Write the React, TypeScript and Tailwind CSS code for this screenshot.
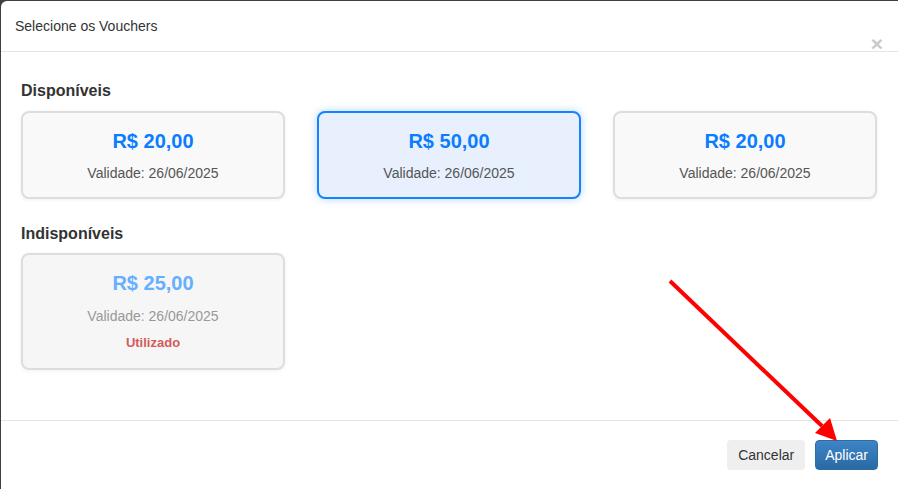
const font = { fontFamily: '"Liberation Sans", Arial, sans-serif' };

type Voucher = { valor: string; validade: string; selected?: boolean };

const disponiveis: Voucher[] = [
  { valor: "R$ 20,00", validade: "26/06/2025" },
  { valor: "R$ 50,00", validade: "26/06/2025", selected: true },
  { valor: "R$ 20,00", validade: "26/06/2025" },
];

function VoucherCard({ v }: { v: Voucher }) {
  return (
    <div
      className={
        v.selected
          ? "rounded-[8px] border-2 border-[#1682fb] bg-[#e7f0fc] pt-4 pb-4 text-center shadow-[0_0_8px_rgba(0,123,255,0.3)]"
          : "rounded-[8px] border-2 border-[#dddddd] bg-[#f9f9f9] pt-4 pb-4 text-center shadow-[0_1px_4px_rgba(0,0,0,0.06)]"
      }
    >
      <div className="text-[20px] leading-6 font-bold text-[#0a7cff]">{v.valor}</div>
      <div className="mt-[12px] text-sm leading-4 text-[#555]">Validade: {v.validade}</div>
    </div>
  );
}

export default function App() {
  return (
    <div className="relative h-[489px] w-[898px] overflow-hidden bg-[#3f3f3f] pl-px pt-px" style={font}>
      <div className="h-full rounded-tl-[6px] bg-white">
        {/* header */}
        <div className="relative border-b border-[#e5e5e5] py-[15px] pl-[14px] pr-[15px]">
          <h4 className="text-sm leading-5 text-[#333]">Selecione os Vouchers</h4>
          <span className="absolute right-[15px] top-[33px] text-[21px] leading-5 font-bold text-[#c9c9c9]">×</span>
        </div>

        {/* body */}
        <div className="pl-[20px] pr-[21px] pt-[30px] pb-[50px]">
          <h3 className="text-base leading-[18px] font-bold text-[#333]">Disponíveis</h3>
          <div className="mt-[11px] grid grid-cols-3 gap-8">
            {disponiveis.map((v, i) => (
              <VoucherCard key={i} v={v} />
            ))}
          </div>

          <h3 className="mt-[26px] text-base leading-[18px] font-bold text-[#333]">Indisponíveis</h3>
          <div className="mt-[10px] grid grid-cols-3 gap-8">
            <div className="rounded-[8px] border-2 border-[#dddddd] bg-[#f6f6f6] pt-4 pb-[17px] text-center shadow-[0_1px_4px_rgba(0,0,0,0.06)]">
              <div className="text-[20px] leading-6 font-bold text-[#66afff]">R$ 25,00</div>
              <div className="mt-[13px] text-sm leading-4 text-[#999]">Validade: 26/06/2025</div>
              <div className="mt-[11px] text-[13px] leading-4 font-bold text-[#d45a5a]">Utilizado</div>
            </div>
          </div>
        </div>

        {/* footer */}
        <div className="flex justify-end gap-[10px] border-t border-[#e5e5e5] pt-[19px] pr-5">
          <button className="rounded-[4px] bg-[#efefef] px-[11px] py-[5px] text-sm leading-5 text-[#333]">Cancelar</button>
          <button className="rounded-[4px] border border-[#2e6da4] bg-gradient-to-b from-[#3d85c6] to-[#2a6aa3] px-[9px] py-[4px] text-sm leading-5 text-white">
            Aplicar
          </button>
        </div>
      </div>

      {/* annotation arrow */}
      <svg className="pointer-events-none absolute left-0 top-0" width="898" height="489">
        <line x1="670" y1="281" x2="822" y2="426" stroke="#ff0000" strokeWidth="4" />
        <polygon points="837,441 830,418 815,433" fill="#ff0000" />
      </svg>
    </div>
  );
}
